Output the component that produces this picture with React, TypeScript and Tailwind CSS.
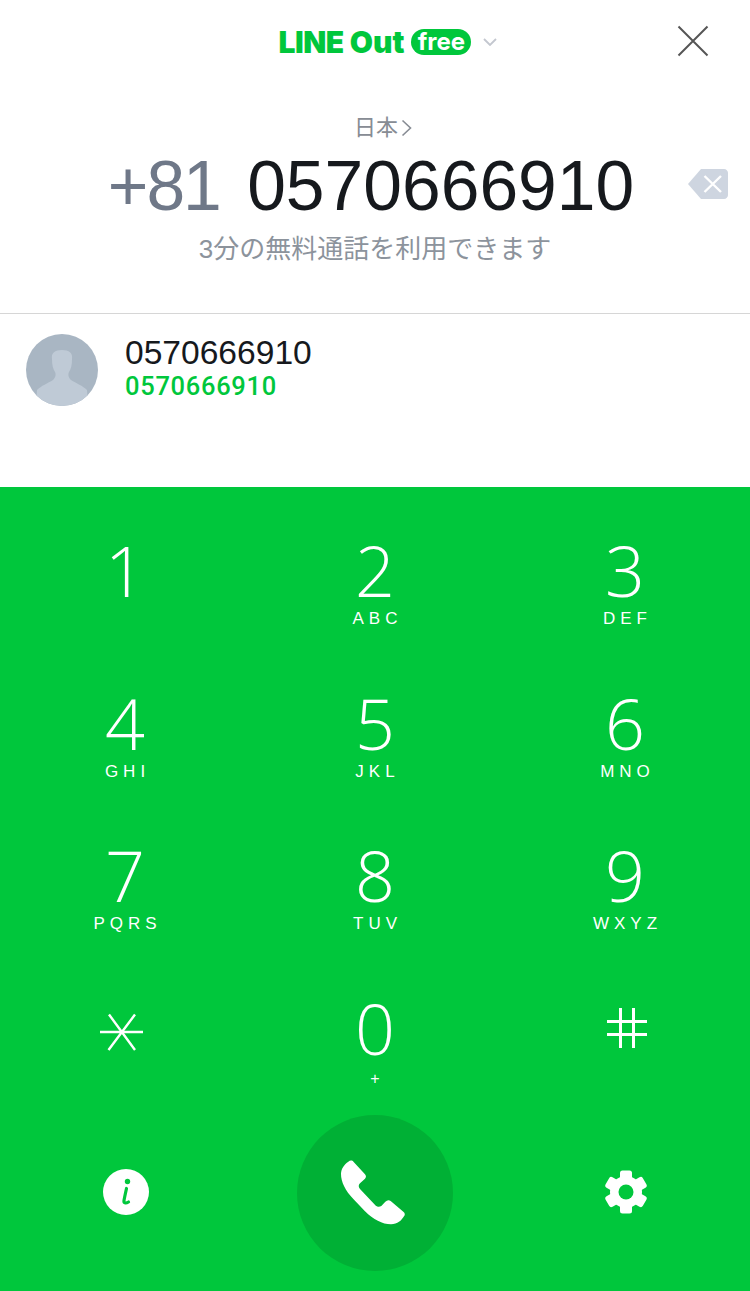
import React from 'react';

const SANS = "font-['Liberation_Sans','Noto_Sans_CJK_JP',sans-serif]";

const keys = [
  { digit: '1', letters: '' },
  { digit: '2', letters: 'ABC' },
  { digit: '3', letters: 'DEF' },
  { digit: '4', letters: 'GHI' },
  { digit: '5', letters: 'JKL' },
  { digit: '6', letters: 'MNO' },
  { digit: '7', letters: 'PQRS' },
  { digit: '8', letters: 'TUV' },
  { digit: '9', letters: 'WXYZ' },
];

const StarIcon = () => (
  <svg width="46" height="40" viewBox="0 0 46 40" fill="none" stroke="white">
    <path d="M1 20H44" strokeWidth="2.4" />
    <path d="M10 2.5L36 38M36 2.5L9.500 38" strokeWidth="2.4" />
  </svg>
);

const HashIcon = () => (
  <svg width="42" height="42" viewBox="0 0 42 42" fill="none" stroke="white" strokeWidth="3">
    <path d="M14.500 1V41M27.500 1V41M1 14.500H41M1 27.500H41" />
  </svg>
);

const InfoIcon = () => (
  <svg width="46" height="46" viewBox="0 0 46 46">
    <circle cx="23" cy="23" r="23" fill="white" />
    <circle cx="24.500" cy="12.500" r="2.700" fill="#00c73c" />
    <path d="M23.500 19.500C22.500 24 21.600 28 21 31.500C20.600 34 22.500 34.800 25.500 33" fill="none" stroke="#00c73c" strokeWidth="3.200" strokeLinecap="round" />
  </svg>
);

const GearIcon = () => (
  <svg width="46" height="46" viewBox="0 0 46 46">
    <circle cx="23" cy="23" r="16" fill="white" />
    {[0, 60, 120, 180, 240, 300].map((deg) => (
      <rect key={deg} x="17" y="1.500" width="12" height="12" rx="2.500" fill="white" transform={`rotate(${deg} 23 23)`} />
    ))}
    <circle cx="23" cy="23" r="7.500" fill="#00c73c" />
  </svg>
);

const PhoneIcon = () => (
  <svg width="70" height="70" viewBox="165 160 210 210">
    <path
      d="M190 171C196 166 202 167 206 172L240 209C244 214 244 218 240 222L225 236C220 241 220 247 225 253L271 302C276 307 283 308 289 304L301 291C306 286 312 285 317 289L355 321C360 325 361 330 357 335C349 348 338 359 318 359C292 359 265 345 240 320L205 283C181 258 168 232 168 208C168 192 178 179 190 171Z"
      fill="white"
    />
  </svg>
);

export default function App() {
  return (
    <div className={`w-[750px] h-[1291px] bg-white flex flex-col overflow-hidden ${SANS}`}>
      {/* header */}
      <div className="relative h-[83px] flex items-center justify-center shrink-0 pl-[26px]">
        <div className="flex items-center">
          <span className="font-['Inter',sans-serif] font-black text-[30px] leading-none tracking-[-0.5px] text-[#00c73c]">
            LINE
          </span>
          <span className="ml-[6px] font-['Inter',sans-serif] font-black text-[30px] leading-none tracking-[0px] text-[#00c73c]">
            Out
          </span>
          <span className="ml-[7px] w-[60px] h-[26px] rounded-full bg-[#00c73c] flex items-center justify-center font-['Inter',sans-serif] font-bold text-[24px] leading-none text-white">
            free
          </span>
          <svg className="ml-[12px]" width="14" height="8" viewBox="0 0 14 8" fill="none" stroke="#c3c7cf" strokeWidth="1.800">
            <path d="M1 1L7 7L13 1" />
          </svg>
        </div>
        <svg className="absolute left-[677px] top-[25px]" width="32" height="32" viewBox="0 0 32 32" fill="none" stroke="#555555" strokeWidth="2">
          <path d="M1.500 1.500L30.500 30.500M30.500 1.500L1.500 30.500" />
        </svg>
      </div>

      {/* number */}
      <div className="h-[231px] shrink-0 border-b border-[#d6d6d6] flex flex-col items-center">
        <div className="mt-[31px] pl-[16px] h-[28px] flex items-center text-[22px] leading-none text-[#878c94]">
          日本
          <svg className="ml-[3px]" width="11" height="18" viewBox="0 0 11 18" fill="none" stroke="#878c94" strokeWidth="1.600">
            <path d="M1.500 1.500L9.500 9L1.500 16.500" />
          </svg>
        </div>
        <div className="relative w-full flex justify-center mt-[4px] pr-[8px] text-[69.6px] leading-[80px] whitespace-pre">
          <span className="text-[#6f7888] tracking-[-2px] mr-[10px]">+81 </span>
          <span className="text-[#16191d]">0570666910</span>
          <svg className="absolute left-[688px] top-[23px]" width="40" height="30" viewBox="0 0 40 30">
            <path d="M13 0H36C38.200 0 40 1.800 40 4V26C40 28.200 38.200 30 36 30H13L0 15Z" fill="#ced5e0" />
            <path d="M16.500 7L33 23M33 7L16.500 23" stroke="white" strokeWidth="2.400" fill="none" />
          </svg>
        </div>
        <div className="mt-[5px] text-[26px] leading-[36px] text-[#8c939c]">3分の無料通話を利用できます</div>
      </div>

      {/* contact */}
      <div className="h-[173px] shrink-0 flex items-start pl-[26px] pt-[20px]">
        <svg width="72" height="72" viewBox="0 0 72 72" className="shrink-0">
          <defs>
            <clipPath id="avatar">
              <circle cx="36" cy="36" r="36" />
            </clipPath>
          </defs>
          <circle cx="36" cy="36" r="36" fill="#a9b6c3" />
          <path
            clipPath="url(#avatar)"
            d="M26 25C25 19 29 16 36 16C43 16 47 19 46 25C46 31 45 35 43 38C42 40 42 43 45 46C50 49 57 52 61 56C62 70 62 72 60 72H12C10 72 10 70 11 56C15 52 22 49 27 46C30 43 30 40 29 38C27 35 26 31 26 25Z"
            fill="#bfcad6"
          />
        </svg>
        <div className="ml-[27px] flex flex-col">
          <div className="text-[33.600px] leading-[38px] text-[#16191d]">0570666910</div>
          <div className="font-['Roboto',sans-serif] font-medium text-[25.5px] tracking-[0.7px] leading-[28px] text-[#00c73c]">0570666910</div>
        </div>
      </div>

      {/* keypad */}
      <div className="flex-1 bg-[#00c73c] pt-[51px] text-white grid grid-cols-3 grid-rows-[152.5px_152.5px_152.5px_119.5px_176px]">
        {keys.map((k) => (
          <div key={k.digit} className="flex flex-col items-center">
            <div className="mt-[-2px] font-['Open_Sans',sans-serif] font-light text-[70px] leading-[68px] h-[68px]">{k.digit}</div>
            <div className="mt-[5px] text-[17px] leading-[20px] tracking-[5px] pl-[5px]">{k.letters}</div>
          </div>
        ))}
        <div className="flex justify-center pt-[16px] pr-[7px]">
          <div className="h-[40px]">
            <StarIcon />
          </div>
        </div>
        <div className="flex flex-col items-center">
          <div className="mt-[-2px] font-['Open_Sans',sans-serif] font-light text-[70px] leading-[68px] h-[68px]">0</div>
          <div className="mt-[7px] text-[16px] leading-[20px]">+</div>
        </div>
        <div className="flex justify-center pt-[11px] pl-[4px]">
          <div className="h-[42px]">
            <HashIcon />
          </div>
        </div>
        <div className="flex justify-center items-start pt-[54px] pl-[2px]">
          <InfoIcon />
        </div>
        <div className="flex justify-center items-start">
          <div className="w-[156px] h-[156px] rounded-full bg-[#00b035] flex items-center justify-center">
            <PhoneIcon />
          </div>
        </div>
        <div className="flex justify-center items-start pt-[54px] pl-[2px]">
          <GearIcon />
        </div>
      </div>
    </div>
  );
}
